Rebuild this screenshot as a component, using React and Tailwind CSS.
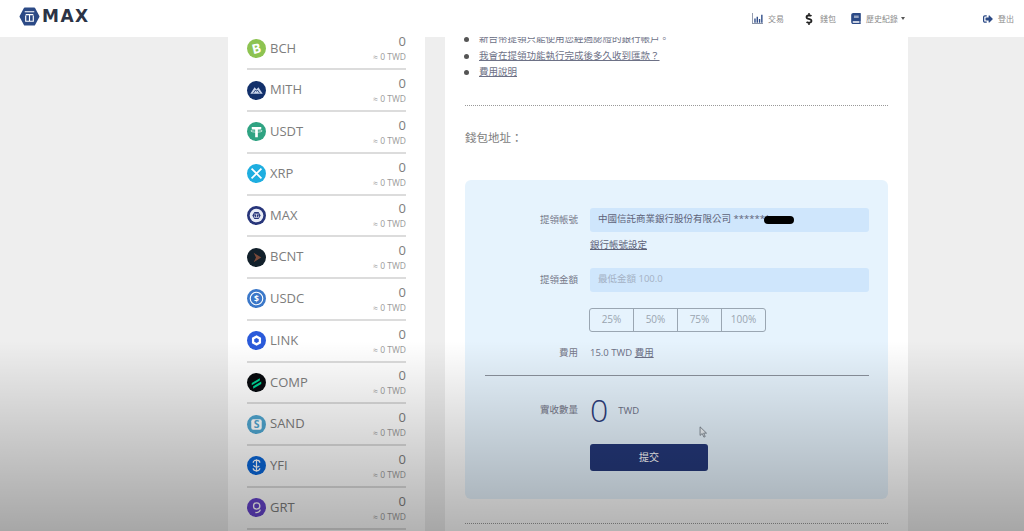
import React from 'react';
import { FaBook, FaDollarSign, FaSignOutAlt } from 'react-icons/fa';

const font = "font-['Open_Sans','Noto_Sans_CJK_TC',sans-serif]";

// coin logos, all drawn in a 20x20 box
const coinArt = {
    BCH: (
        <>
            <circle cx="10" cy="10" r="10" fill="#8dc351" />
            <text x="10" y="15" textAnchor="middle" fontSize="14" fontWeight="700" fill="#fff" transform="rotate(-14 10 10)" fontFamily="Open Sans">B</text>
        </>
    ),
    MITH: (
        <>
            <circle cx="10" cy="10" r="10" fill="#12306b" />
            <path d="M3.5 13.5 L8 6.5 L10 9 L12 6.5 L16.5 13.5 Z" fill="#c7d3ea" />
            <path d="M6.5 13 L9 9.5 L10 11 L11 9.5 L13.5 13" fill="none" stroke="#12306b" strokeWidth="0.8" />
        </>
    ),
    USDT: (
        <>
            <circle cx="10" cy="10" r="10" fill="#2fa382" />
            <path d="M5 5.2h10v2.4h-3.6V16H8.6V7.6H5z" fill="#fff" />
            <ellipse cx="10" cy="9.4" rx="6" ry="1.3" fill="none" stroke="#fff" strokeWidth="0.7" />
        </>
    ),
    XRP: (
        <>
            <circle cx="10" cy="10" r="10" fill="#1eaee0" />
            <path d="M4.8 4.8 L15.2 15.2 M15.2 4.8 L4.8 15.2" stroke="#fff" strokeWidth="1.8" />
        </>
    ),
    MAX: (
        <>
            <circle cx="10" cy="10" r="10" fill="#27357a" />
            <circle cx="10" cy="10" r="7.2" fill="#e8ecf6" />
            <path d="M5.6 10 L7.8 6.2 H12.2 L14.4 10 L12.2 13.8 H7.8 Z" fill="#27357a" />
            <path d="M7.5 8.5h5M7.8 10v2h4.4v-2M10 8.5v3.5" stroke="#fff" strokeWidth="0.7" fill="none" />
        </>
    ),
    BCNT: (
        <>
            <circle cx="10" cy="10" r="10" fill="#12202b" />
            <path d="M7 5 L15 10 L7 15 L9.5 10 Z" fill="#7b4a3a" />
        </>
    ),
    USDC: (
        <>
            <circle cx="10" cy="10" r="10" fill="#3b78c9" />
            <circle cx="10" cy="10" r="6.6" fill="none" stroke="#fff" strokeWidth="1.2" />
            <text x="10" y="13.2" textAnchor="middle" fontSize="9" fontWeight="700" fill="#fff" fontFamily="Open Sans">$</text>
        </>
    ),
    LINK: (
        <>
            <circle cx="10" cy="10" r="10" fill="#2a5ada" />
            <path d="M10 4.4 L14.8 7.2 V12.8 L10 15.6 L5.2 12.8 V7.2 Z" fill="#fff" />
            <path d="M10 7.4 L12.4 8.7 V11.3 L10 12.6 L7.6 11.3 V8.7 Z" fill="#2a5ada" />
        </>
    ),
    COMP: (
        <>
            <circle cx="10" cy="10" r="10" fill="#070a0e" />
            <path d="M5 10.5 L13.5 5.5 V8 L5 13 Z M6.5 14 L15 9 V11.5 L6.5 16.5 Z" fill="#00d395" />
        </>
    ),
    SAND: (
        <>
            <circle cx="10" cy="10" r="10" fill="#4fa6d0" />
            <rect x="4.5" y="4.5" width="11" height="11" rx="2" fill="#fff" />
            <text x="10" y="14" textAnchor="middle" fontSize="11" fontWeight="700" fill="#4fa6d0" fontFamily="Open Sans">S</text>
        </>
    ),
    YFI: (
        <>
            <circle cx="10" cy="10" r="10" fill="#0a66d8" />
            <path d="M10 3.5V16.5M6.5 7a3.5 2.6 0 0 1 7 0M13.5 13a3.5 2.6 0 0 1-7 0M7 9.5a3.2 2.2 0 0 0 6 1" fill="none" stroke="#fff" strokeWidth="1.3" />
        </>
    ),
    GRT: (
        <>
            <circle cx="10" cy="10" r="10" fill="#6543cc" />
            <circle cx="10.2" cy="8.4" r="3.3" fill="none" stroke="#fff" strokeWidth="1.4" />
            <path d="M14 12.2 C13.5 14.5 11.5 15.5 8.8 15.3" fill="none" stroke="#fff" strokeWidth="1.4" />
        </>
    ),
};

const coins = Object.keys(coinArt);

const Coin = ({ name }) => (
    <div className="flex h-[41.75px] items-center border-b-2 border-[#dcdcdc] shrink-0">
        <svg viewBox="0 0 20 20" className="w-[19px] h-[19px] shrink-0">{coinArt[name]}</svg>
        <span className="ml-[4px] text-[13px] text-[#7d7d7d]">{name}</span>
        <div className="ml-auto flex flex-col items-end">
            <span className="text-[13px] leading-[18px] text-[#7d7d7d]">0</span>
            <span className="text-[8.5px] leading-[14px] text-[#9a9a9a]">≈ 0 TWD</span>
        </div>
    </div>
);

const Field = ({ label, children }) => (
    <div className="flex items-center">
        <div className="w-[113px] shrink-0 mt-[1px] text-right text-[9.5px] text-[#77798a]">{label}</div>
        <div className="ml-[12px] flex-1 min-w-0">{children}</div>
    </div>
);

const NavItem = ({ icon, label, caret, className }) => (
    <div className={`flex items-center text-[8px] text-[#8a8a8a] ${className}`}>
        {icon}
        <span>{label}</span>
        {caret && <span className="ml-[3px] border-x-[2.5px] border-t-[3px] border-x-transparent border-t-[#555]" />}
    </div>
);

const App = () => {
    return (
        <div className={`relative w-[1024px] h-[531px] overflow-hidden bg-[#eeeeee] ${font}`}>
            <header className="relative z-10 flex items-center h-[37px] bg-white pl-[19px]">
                <svg viewBox="0 0 22 20" className="w-[21px] h-[19px] mt-[-4px]">
                    <path d="M1.5 10 L6 1.5 H16 L20.5 10 L16 18.5 H6 Z" fill="#2c4a86" stroke="#2c4a86" strokeWidth="2" strokeLinejoin="round" />
                    <path d="M6 5h10M7 8h8M7 9v6h8V9M11 8v7" stroke="#fff" strokeWidth="1.2" fill="none" />
                </svg>
                <span className="ml-[2px] mt-[-4px] w-[48px] font-['DejaVu_Sans',sans-serif] text-[17px] font-bold tracking-[1.5px] text-[#2b3345]">MAX</span>
                <NavItem
                    className="ml-[662px] w-[52px]"
                    label="交易"
                    icon={
                        <svg viewBox="0 0 12 12" className="w-[11px] h-[11px] mr-[5px]" fill="#2c4a86">
                            <path d="M0 0h1v11h11v1H0z" fill="#8a94a8" />
                            <path d="M2.5 6h1.5v4.5H2.5zM5 4h1.5v6.5H5zM7.5 6.5H9v4H7.5zM10 2h1.5v8.5H10z" />
                        </svg>
                    }
                />
                <NavItem
                    className="w-[47px]"
                    label="錢包"
                    icon={<FaDollarSign className="w-[10px] h-[12px] mr-[6px] text-[#222]" />}
                />
                <NavItem
                    className="w-[132px]"
                    label="歷史紀錄"
                    caret
                    icon={<FaBook className="w-[10px] h-[11px] mr-[5px] text-[#2c4a86]" />}
                />
                <NavItem
                    label="登出"
                    icon={<FaSignOutAlt className="w-[10px] h-[10px] mr-[5px] text-[#2c4a86]" />}
                />
            </header>

            <main className="flex h-[494px] overflow-hidden pl-[228px] gap-[20px]">
                <section className="w-[197px] shrink-0 bg-white px-[19px]">
                    <div className="flex flex-col -mt-[8.5px]">
                        {coins.map(name => <Coin key={name} name={name} />)}
                    </div>
                </section>

                <section className="w-[463px] shrink-0 bg-white px-[20px]">
                    <ul className="-mt-[6px] pl-[14px] text-[9.5px] leading-[16.5px] text-[#6d7186]">
                        {[
                            { text: '新台幣提領只能使用您經過認證的銀行帳戶。' },
                            { text: '我會在提領功能執行完成後多久收到匯款？', link: true },
                            { text: '費用說明', link: true },
                        ].map(item => (
                            <li key={item.text} className="relative">
                                <span className="absolute left-[-15px] top-[6px] w-[5px] h-[5px] rounded-full bg-[#555]" />
                                <span className={item.link ? 'underline' : ''}>{item.text}</span>
                            </li>
                        ))}
                    </ul>

                    <div className="mt-[24px] border-t border-dotted border-[#999]" />
                    <div className="mt-[22px] text-[11.5px] leading-[20px] text-[#7d7d7d]">錢包地址：</div>

                    <div className="relative mt-[32px] rounded-[6px] bg-[#e6f3fd] pt-[28px] pb-[28px] pr-[19px]">
                        <Field label="提領帳號">
                            <div className="flex items-center h-[24px] rounded-[3px] bg-[#cfe6fc] pl-[8px] text-[9.5px] text-[#5d6278]">
                                中國信託商業銀行股份有限公司 *******
                                <span className="-ml-[6px] w-[30px] h-[8px] rounded-full bg-black" />
                            </div>
                        </Field>
                        <div className="ml-[125px] mt-[3px] text-[9.5px] leading-[20px] text-[#5d6278] underline">銀行帳號設定</div>

                        <div className="mt-[13px]">
                            <Field label="提領金額">
                                <div className="flex items-center h-[24px] rounded-[3px] bg-[#cfe6fc] pl-[8px] text-[9.5px] text-[#a4b1c4]">
                                    最低金額 100.0
                                </div>
                            </Field>
                        </div>

                        <div className="ml-[124px] mt-[16px] flex w-[177px] h-[24px] rounded-[3px] border border-[#9aa6b2] text-[10px] text-[#9aa5b0]">
                            {['25%', '50%', '75%', '100%'].map(pct => (
                                <div key={pct} className="flex flex-1 items-center justify-center border-l border-[#9aa6b2] first:border-l-0">{pct}</div>
                            ))}
                        </div>

                        <div className="mt-[11px] h-[20px]">
                            <Field label="費用">
                                <div className="text-[9.5px] leading-[20px] text-[#6d7186]">15.0 TWD <span className="underline">費用</span></div>
                            </Field>
                        </div>

                        <div className="ml-[20px] mt-[12px] border-t border-[#8b929c]" />

                        <div className="mt-[14px] h-[40px]">
                            <Field label="實收數量">
                                <div className="flex items-center h-[40px]">
                                    <span className="text-[32px] font-light leading-[40px] text-[#2c3e7c]">0</span>
                                    <span className="ml-[10px] mt-[3px] text-[9.5px] text-[#6d7186]">TWD</span>
                                </div>
                            </Field>
                        </div>

                        <div className="ml-[125px] mt-[14px] flex items-center justify-center w-[118px] h-[27px] rounded-[3px] bg-[#24387a] text-[10px] text-white">提交</div>

                        <svg viewBox="0 0 10 14" className="absolute left-[234px] top-[246px] w-[9px] h-[12px]">
                            <path d="M1 1 V11 L3.5 8.8 L5.5 13 L7 12.3 L5.2 8.3 H8.5 Z" fill="#eef3f7" stroke="#59636e" strokeWidth="0.8" />
                        </svg>
                    </div>

                    <div className="mt-[24px] border-t border-dotted border-[#999]" />
                </section>
            </main>

            {/* video player shade along the bottom */}
            <div className="absolute inset-x-0 bottom-0 z-20 h-[190px] bg-gradient-to-b from-transparent to-black/30 pointer-events-none" />
        </div>
    );
};

export default App;
